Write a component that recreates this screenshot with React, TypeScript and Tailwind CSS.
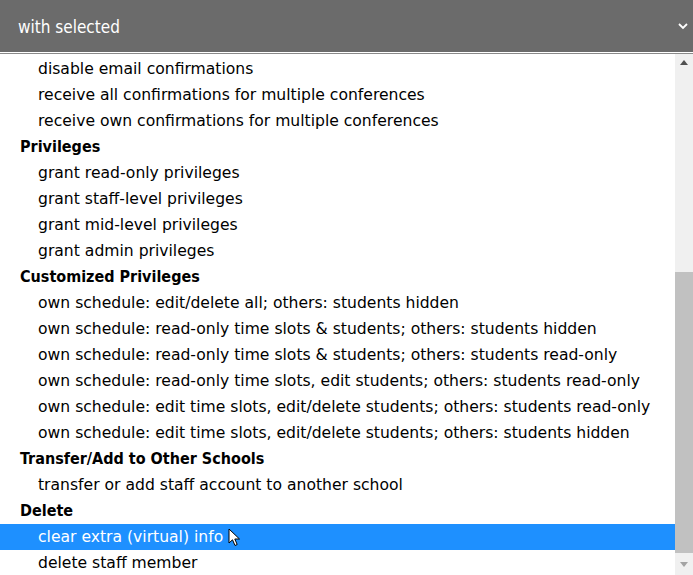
import React from "react";

type Group = { label: string | null; items: string[] };

const groups: Group[] = [
  {
    label: null,
    items: [
      "disable email confirmations",
      "receive all confirmations for multiple conferences",
      "receive own confirmations for multiple conferences",
    ],
  },
  {
    label: "Privileges",
    items: [
      "grant read-only privileges",
      "grant staff-level privileges",
      "grant mid-level privileges",
      "grant admin privileges",
    ],
  },
  {
    label: "Customized Privileges",
    items: [
      "own schedule: edit/delete all; others: students hidden",
      "own schedule: read-only time slots & students; others: students hidden",
      "own schedule: read-only time slots & students; others: students read-only",
      "own schedule: read-only time slots, edit students; others: students read-only",
      "own schedule: edit time slots, edit/delete students; others: students read-only",
      "own schedule: edit time slots, edit/delete students; others: students hidden",
    ],
  },
  {
    label: "Transfer/Add to Other Schools",
    items: ["transfer or add staff account to another school"],
  },
  {
    label: "Delete",
    items: ["clear extra (virtual) info", "delete staff member"],
  },
];

const selected = "clear extra (virtual) info";

function Cursor() {
  return (
    <svg
      width="13"
      height="19"
      viewBox="0 0 13 19"
      className="absolute left-[228px] top-[4px]"
    >
      <path
        d="M1 1 L1 15 L4.5 11.8 L7 17.5 L9.2 16.5 L6.8 11 L11.5 11 Z"
        fill="#fff"
        stroke="#000"
        strokeWidth="1"
        strokeLinejoin="round"
      />
    </svg>
  );
}

export default function App() {
  return (
    <div className="w-[693px] h-[575px] overflow-hidden bg-white text-black font-['DejaVu_Sans_Condensed','DejaVu_Sans',sans-serif]">
      <div className="h-[52px] bg-[#6b6b6b] flex items-center justify-between pl-[18px] pr-[4px] pt-[3px] text-white text-[17px]">
        <span>with selected</span>
        <svg width="12" height="12" viewBox="0 0 12 12" className="-mt-[3px]">
          <path d="M2 4 L6 8 L10 4" fill="none" stroke="#fff" strokeWidth="1.8" />
        </svg>
      </div>
      <div className="h-px bg-white" />
      <div className="flex h-[522px] border-t border-[#8a8a8a]">
        <div className="flex-1 overflow-hidden pt-[2px]">
          {groups.map((g, gi) => (
            <div key={gi}>
              {g.label && (
                <div className="h-[26px] flex items-center pl-[20px] font-bold text-[16px]">
                  {g.label}
                </div>
              )}
              {g.items.map((item) => (
                <div
                  key={item}
                  className={
                    item === selected
                      ? "relative h-[26px] flex items-center pl-[38px] pt-px text-[15.6px] font-['DejaVu_Sans',sans-serif] bg-[#1e90ff] text-white"
                      : "h-[26px] flex items-center pl-[38px] pt-px text-[15.6px] font-['DejaVu_Sans',sans-serif]"
                  }
                >
                  {item}
                  {item === selected && <Cursor />}
                </div>
              ))}
            </div>
          ))}
        </div>
        <div className="w-[18px] bg-[#f0f0f0] flex flex-col">
          <div className="h-[17px] flex items-center justify-center">
            <svg width="8" height="5" viewBox="0 0 8 5">
              <path d="M0 5 L4 0 L8 5 Z" fill="#505050" />
            </svg>
          </div>
          <div className="h-[201px]" />
          <div className="h-[281px] bg-[#c1c1c1]" />
          <div className="flex-1 flex items-center justify-center">
            <svg width="8" height="5" viewBox="0 0 8 5">
              <path d="M0 0 L4 5 L8 0 Z" fill="#a3a3a3" />
            </svg>
          </div>
        </div>
      </div>
    </div>
  );
}
